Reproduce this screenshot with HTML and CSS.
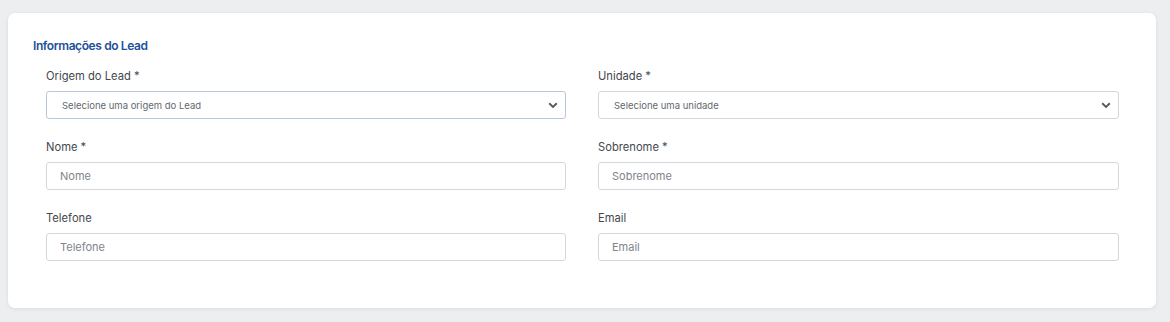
FILE: index.html
```html
<html>
    <head>
        <meta name="viewport" content="width=device-width, initial-scale=1">
        <link rel="stylesheet" href="styles.css">
    </head>
    <body>
        <div class='card'>
            <div class='card-title'>Informações do Lead</div>
            <div class='form-grid'>
                <div class='field'>
                    <label class='field-label'>Origem do Lead *</label>
                    <div class='select focused'>
                        <span class='select-text'>Selecione uma origem do Lead</span>
                        <svg class='chevron' width='10' height='7' viewBox='0 0 10 7'><path d='M1.2 1.3 L5 5 L8.8 1.3' fill='none' stroke='#555b63' stroke-width='1.9'/></svg>
                    </div>
                </div>
                <div class='field'>
                    <label class='field-label'>Unidade *</label>
                    <div class='select'>
                        <span class='select-text'>Selecione uma unidade</span>
                        <svg class='chevron' width='10' height='7' viewBox='0 0 10 7'><path d='M1.2 1.3 L5 5 L8.8 1.3' fill='none' stroke='#555b63' stroke-width='1.9'/></svg>
                    </div>
                </div>
                <div class='field'>
                    <label class='field-label'>Nome *</label>
                    <input class='input' placeholder='Nome'>
                </div>
                <div class='field'>
                    <label class='field-label'>Sobrenome *</label>
                    <input class='input' placeholder='Sobrenome'>
                </div>
                <div class='field'>
                    <label class='field-label'>Telefone</label>
                    <input class='input' placeholder='Telefone'>
                </div>
                <div class='field'>
                    <label class='field-label'>Email</label>
                    <input class='input' placeholder='Email'>
                </div>
            </div>
        </div>
    </body>
</html>
```

FILE: styles.css
```css
body {
    margin: 0;
    background: #edeef0;
    font-family: Inter, "Noto Sans", sans-serif;
    padding: 13px 14px 14px 8px;
}
.card {
    background: white;
    border-radius: 7px;
    box-shadow: 0 1px 4px rgba(0, 0, 0, 0.08);
    padding: 25px 37px 33px 38px;
    height: 295px;
    box-sizing: border-box;
}
.card-title {
    color: #1d4f9b;
    font-size: 12px;
    font-weight: 600;
    letter-spacing: -0.4px;
    margin-left: -13px;
    line-height: 16px;
}
.form-grid {
    display: grid;
    grid-template-columns: 520px 521px;
    column-gap: 32px;
    row-gap: 21px;
    margin-top: 15px;
}
.field {
    display: flex;
    flex-direction: column;
}
.field-label {
    font-size: 11.2px;
    color: #44484e;
    line-height: 14px;
    margin-bottom: 8px;
}
.select, .input {
    height: 28px;
    box-sizing: border-box;
    border: 1px solid #d6d7d9;
    border-radius: 3px;
    background: white;
}
.select {
    display: flex;
    align-items: center;
    padding: 0 7px 0 15px;
}
.select.focused {
    border-color: #b7c6da;
}
.select-text {
    flex: 1;
    font-size: 9.5px;
    color: #63686f;
}
.input {
    padding: 0 13px;
    font-family: inherit;
    font-size: 11px;
    outline: none;
}
.input::placeholder {
    color: #80848b;
}
```
